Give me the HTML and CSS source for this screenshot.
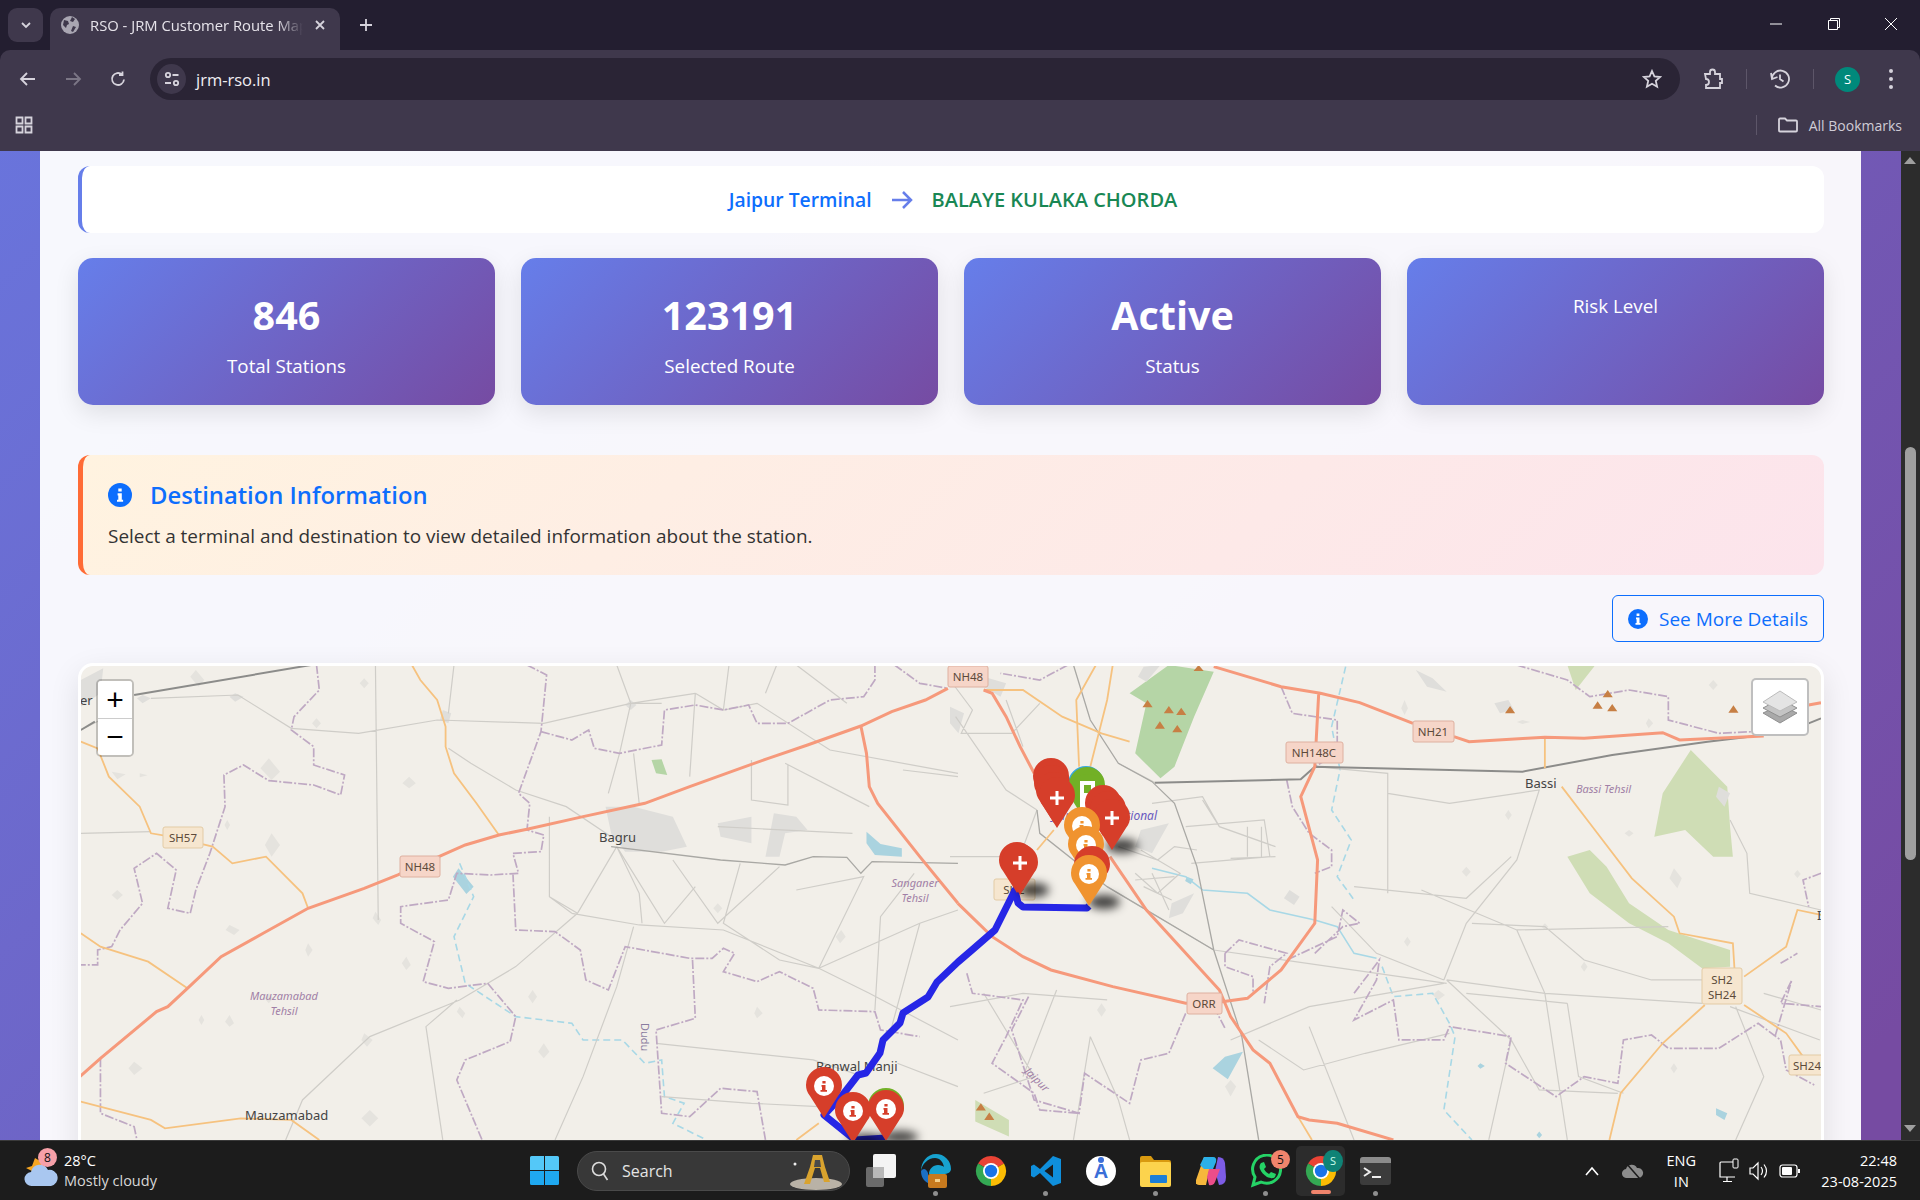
FILE: index.html
```html
<!DOCTYPE html>
<html lang="en">
<head>
  <meta charset="UTF-8" />
  <title>RSO - JRM Customer Route Map</title>
  <link rel="stylesheet" href="styles.css">
</head>
<body>
  <svg class="defs" width="0" height="0">
    <defs>
      <symbol id="i-circle" viewBox="0 0 24 24">
        <circle cx="12" cy="12" r="12" fill="#0d6efd"/>
        <path fill="#fff" d="M10.3 5.500h3.400v3h-3.400zM9.600 10.300h4.200v6.400h1.300v2.100H9v-2.100h1.300v-4.300H9.600z"/>
      </symbol>
      <symbol id="chrome" viewBox="0 0 32 32">
        <path fill="#ea4335" d="M3 8.500A15 15 0 0 1 29 8.500L16 16z"/>
        <path fill="#34a853" d="M3 8.500A15 15 0 0 0 16 31L16 16z"/>
        <path fill="#fbbc04" d="M29 8.500A15 15 0 0 1 16 31L16 16z"/>
        <circle cx="16" cy="16" r="8" fill="#fff"/>
        <circle cx="16" cy="16" r="6.200" fill="#1a73e8"/>
      </symbol>
      <path id="pin" d="M0 0L-14-22C-17-26-18-29-18-33A18 18 0 0 1 18-33C18-29 17-26 14-22Z"/>
      <g id="pin-plus">
        <rect x="-7" y="-33.500" width="14" height="3" fill="#fff"/>
        <rect x="-1.500" y="-39" width="3" height="14" fill="#fff"/>
      </g>
      <g id="pin-info">
        <circle cx="0" cy="-32" r="10" fill="#fff"/>
        <path d="M-1.600-37h3.200v2.500h-3.200zM-2.500-33h4v5h1.500v1.700h-6.500v-1.700h1.500v-3.300h-.5z"/>
      </g>
      <filter id="soft" x="-50%" y="-100%" width="200%" height="300%"><feGaussianBlur stdDeviation="5"/></filter>
    </defs>
  </svg>

  <!-- browser chrome -->
  <div class="tabstrip">
    <div class="tab-list">
      <svg width="14" height="14" viewBox="0 0 14 14"><path d="M3 5l4 4 4-4" class="ic-line"/></svg>
    </div>
    <div class="tab">
      <svg width="18" height="18" viewBox="0 0 18 18">
        <circle cx="9" cy="9" r="9" fill="#a9a6b2"/>
        <path fill="#3f384c" d="M3 4l4 1 1 3-2 1-1 3-3-3zM11 1l3 2-2 3-3-1zM12 10l3 1-3 5-2-1z"/>
      </svg>
      <span class="tab-title">RSO - JRM Customer Route Map</span>
      <svg class="tab-close" width="14" height="14" viewBox="0 0 14 14"><path d="M3 3l8 8M11 3l-8 8" class="ic-line"/></svg>
    </div>
    <svg class="new-tab" width="16" height="16" viewBox="0 0 16 16"><path d="M8 2v12M2 8h12" class="ic-line"/></svg>
    <div class="win-controls">
      <div class="win-btn"><svg width="14" height="14" viewBox="0 0 14 14"><path d="M1 7h12" stroke="#fff" fill="none"/></svg></div>
      <div class="win-btn"><svg width="14" height="14" viewBox="0 0 14 14"><path d="M1.500 3.500h9v9h-9zM3.500 3.500v-2h9v9h-2" stroke="#fff" fill="none"/></svg></div>
      <div class="win-btn"><svg width="14" height="14" viewBox="0 0 14 14"><path d="M1 1l12 12M13 1L1 13" stroke="#fff" fill="none"/></svg></div>
    </div>
  </div>

  <div class="toolbar">
    <div class="nav-btn"><svg width="18" height="18" viewBox="0 0 18 18"><path d="M16 9H2M8 3L2 9l6 6" class="ic-line"/></svg></div>
    <div class="nav-btn dim"><svg width="18" height="18" viewBox="0 0 18 18"><path d="M2 9h14M10 3l6 6-6 6" class="ic-line"/></svg></div>
    <div class="nav-btn"><svg width="18" height="18" viewBox="0 0 18 18"><path d="M15 9.500A6 6 0 1 1 13 4.500M13.500 1.500v3.500H10" class="ic-line"/></svg></div>
    <div class="omnibox">
      <div class="site-info">
        <svg width="16" height="16" viewBox="0 0 16 16"><circle cx="4" cy="4" r="2.200" class="ic-line"/><path d="M8.500 4h6M1 12h6" class="ic-line"/><circle cx="12" cy="12" r="2.200" class="ic-line"/></svg>
      </div>
      <span class="url">jrm-rso.in</span>
      <svg class="star" width="20" height="20" viewBox="0 0 20 20"><path d="M10 2l2.400 5.400 5.800.6-4.400 3.900 1.300 5.800L10 14.700l-5.100 3 1.300-5.800L1.800 8l5.800-.6z" class="ic-line"/></svg>
    </div>
    <div class="tools">
      <svg width="24" height="24" viewBox="0 0 24 24"><path d="M4 7h5V5a2.500 2.500 0 0 1 5 0v2h5v5h2v4h-2v5H5v-3a2.500 2.500 0 0 0 0-6z" class="ic-line"/></svg>
      <span class="tool-sep"></span>
      <svg width="24" height="24" viewBox="0 0 24 24"><path d="M4 12a8.500 8.500 0 1 1 3 6.500M3 6l1 6 5.500-2M12 7.500V12l3.500 2.500" class="ic-line"/></svg>
      <span class="tool-sep"></span>
      <span class="avatar">S</span>
      <span class="kebab"><i></i><i></i><i></i></span>
    </div>
  </div>

  <div class="bookmarks">
    <svg width="18" height="18" viewBox="0 0 18 18"><path d="M1.500 1.500h6v6h-6zM10.500 1.500h6v6h-6zM1.500 10.500h6v6h-6zM10.500 10.500h6v6h-6z" class="ic-line"/></svg>
    <span class="bm-sep"></span>
    <svg width="20" height="16" viewBox="0 0 20 16"><path d="M1 2.500a1 1 0 0 1 1-1h5l2 2h9a1 1 0 0 1 1 1v9a1 1 0 0 1-1 1H2a1 1 0 0 1-1-1z" class="ic-line"/></svg>
    <span class="bm-label">All Bookmarks</span>
  </div>

  <!-- page -->
  <div class="viewport">
    <div class="page">
      <div class="container">
        <div class="route-card">
          <span class="from">Jaipur Terminal</span>
          <svg width="22" height="20" viewBox="0 0 22 20"><path d="M1 10h19M12 2l8 8-8 8" fill="none" stroke="#667eea" stroke-width="2.500"/></svg>
          <span class="to">BALAYE KULAKA CHORDA</span>
        </div>

        <div class="stats">
          <div class="stat"><div class="stat-value">846</div><div class="stat-label">Total Stations</div></div>
          <div class="stat"><div class="stat-value">123191</div><div class="stat-label">Selected Route</div></div>
          <div class="stat"><div class="stat-value">Active</div><div class="stat-label">Status</div></div>
          <div class="stat"><div class="stat-label">Risk Level</div></div>
        </div>

        <div class="dest-info">
          <h3><svg width="24" height="24"><use href="#i-circle"/></svg>Destination Information</h3>
          <p>Select a terminal and destination to view detailed information about the station.</p>
        </div>

        <div class="more-row">
          <button class="more-btn"><svg width="20" height="20"><use href="#i-circle"/></svg>See More Details</button>
        </div>

        <div class="map">
          <svg class="map-canvas" width="1740" height="480" viewBox="81 666 1740 480">
            <!-- left half, traced in crop units -->
            <g class="base" transform="translate(78 660) scale(.5612 .3333)">
              <path class="blob" d="M990 440L1060 470 1085 560 1040 575 975 575 950 520 940 440ZM1140 490L1200 470 1200 550 1145 530ZM1240 460L1280 470 1300 510 1260 520 1250 590 1225 590ZM650 150l15 10-5 30-15-10zM985 120l10 15-10 15-10-15zM115 105l15 10-15 15-10-15zM280 100l15 10-15 15-10-15zM5 60L45 25 40 100 5 140z"/>
              <path class="spot" d="M340 295l20 40-15 25-20-35zM425 175l8 15-8 15-8-15zM510 55l8 15-8 15-8-15zM210 30l15 30-10 20-15-30zM590 350l12 20-12 15-12-15zM60 335l25 8-15 15zM110 340l14 6-14 6zM345 520l15 35-15 35-12-35zM266 480l5 15-5 15-5-15zM270 795l18 15-10 15-15-15zM530 755l10 25-5 15-10-20zM680 1040l10 20-5 15-10-20zM510 1120l15 20-10 20-10-20zM830 1150l10 25-10 20-10-20zM520 1350l15 25-15 25-15-25zM270 1065l8 25-8 10-8-15zM220 1065l5 15-5 15-5-15zM100 1205l15 20-15 20-10-20zM810 990l8 20-8 20-8-20zM585 890l8 25-8 15-8-20zM410 850l8 20-8 20-5-20zM70 690l10 15-10 15-10-15zM1140 730l8 15-8 15-8-15zM1210 1040l10 20-10 15-5-15zM1360 810l8 20-10 20-8-20zM340 1000l8 15-8 15-8-15z"/>
              <path class="lake" d="M678 625L705 680 692 702 668 650ZM1405 515L1430 552 1468 565 1468 590 1420 585 1405 550Z"/>
              <path class="forest" d="M1022 300L1040 298 1050 345 1030 340Z"/>
              <path class="river-d" d="M680 610L705 710 670 830 690 970 780 1070 880 1090 900 1140 970 1140 1010 1210 1040 1200 1045 1310 1080 1330 1060 1390 1120 1440"/>
              <path class="minor" d="M5 520L130 515M130 115L285 105 380 205 500 220 640 180 830 190 985 130 1100 100M660 265L700 310 780 390 870 440 950 530M985 130L965 280 945 400M985 130L1040 130M960 560L890 760 780 920 680 1020 520 1130 400 1320 370 1440M880 760L1000 795 1150 810 1320 925 1410 1000 1568 1140M960 560L1000 700 1005 790M960 560L1045 790 1100 680M1060 600L1140 790 1250 620M840 710L890 760M1180 610L1150 790 1250 900 1320 925M1320 925L1500 790 1568 750M1280 690L1400 650 1320 925M1490 640L1430 770 1420 1050M1100 100L1150 150 1210 130 1340 270 1568 340M1260 310L1410 440M1100 100L1090 350M1000 430L990 280M1200 300L1200 420 1265 435 1265 315M675 1020L620 1100 650 1440M990 800L960 980 900 1250 850 1440M1030 1150L1310 1200 1400 1250M1040 1310L1200 1330 1320 1340M1460 1210L1568 1280M1470 330L1568 350M1140 500L1380 520M670 15L660 160M960 15L985 130M1160 15L1150 150M1245 15L1225 100M1280 15L1370 130M530 15L535 780M5 210L40 180M840 470L840 710 880 760M1500 790L1450 1100"/>
              <path class="bound" d="M425 15L430 90 385 170 380 210 420 260 420 315 475 345 468 405 420 375 340 362 295 315 260 345 262 440 235 580 210 690 200 760 160 745 175 630 140 580 100 625 115 730 75 810 60 860 35 870 35 915 5 915M800 15L835 45 825 215 785 400 805 430 800 510 830 525 825 575 775 580 785 640 735 645 675 640 660 720 575 740 575 790 635 845 615 965 660 985 730 970 780 1070 770 1145 690 1200 675 1260 720 1440M825 215L880 240 910 210 920 265 965 280 1040 255 1045 150 1100 135 1150 150 1195 135 1210 190 1265 190 1340 120 1400 110 1420 60 1420 15M1455 15L1500 70 1550 85M775 640L780 810 850 815 895 870 905 960 945 990 975 860 1090 895 1130 895 1150 865 1170 880 1150 935 1210 965 1250 935 1310 985 1320 1050 1420 1055 1430 1110 1500 1130M1095 900L1100 1075 1030 1110 1040 1360 1090 1370 1145 1285 1210 1295 1225 1440M40 1195L40 1360 100 1400 105 1440"/>
              <path class="rail" d="M100 105L415 15M5 210L30 185"/>
              <path class="rail-thin" d="M950 560L1145 600 1260 615 1310 590 1370 592 1395 640 1415 605 1568 610"/>
              <path class="sec" d="M595 15L610 60 640 120 655 200 655 260 670 340 710 430 750 525M5 245L35 265 55 350 110 440 130 520 165 530 240 560 275 610 335 590 400 700 410 745M5 820L40 860 125 905 195 985M5 1325L130 1380 155 1405 290 1375 380 1380 430 1440M1280 1440L1320 1390"/>
              <path class="pri" d="M0 1255L40 1195 140 1055 160 1040 195 985 255 890 330 820 410 745 510 685 570 645 650 585 690 555 750 525 800 508 900 470 1010 430 1090 380 1230 295 1300 255 1395 198 1450 155 1510 120 1550 85M1395 198L1405 280 1410 380 1425 430 1500 590 1568 730"/>
            </g>
            <!-- right half -->
            <g class="base" transform="translate(950 660) scale(.5612 .3333)">
              <path class="scrub" d="M1320 270L1385 380 1390 500 1395 590 1360 590 1310 510 1255 530 1270 400ZM1100 590L1140 570 1170 620 1210 730 1280 810 1390 870 1390 920 1340 925 1280 850 1210 790 1140 700ZM45 1320L105 1380 105 1430 45 1385ZM1100 15L1150 15 1115 90Z"/>
              <path class="forest" d="M390 15L470 35 435 170 400 320 375 355 330 280 350 130 320 100Z"/>
              <path class="blob" d="M0 140l25 20-10 60-15-30zM345 20l30-5-25 50-15-15zM830 30l30 25 25 40-35-15zM605 690l18 20-10 25-18-20zM1370 380l20 20-10 40-15-30zM395 730l40-30-20 60-25 15zM970 130l25-10 10 30-25 10zM60 50l40 20-10 40-30-30zM340 510l50-20-30 90-30-20z"/>
              <path class="spot" d="M1290 625l14 30-8 30-14-30zM810 120l6 25-6 20-6-20zM1020 180l14 6-14 6-10-6zM1245 175l8 15-8 15-5-15zM920 620l8 15-8 15-8-15zM995 450l6 15-6 15-6-15zM270 1030l8 20-8 20-8-20zM1130 905l6 15-6 15-6-15zM815 830l6 15-6 15-6-15zM500 1260l10 20-10 30-10-30zM870 990l12 15-12 15-10-15zM1060 790l6 10-6 10-6-10zM1470 100l5 10-5 10-5-10zM1210 510l8 10-8 10-8-10zM1510 630l6 12-6 12-6-12zM1290 1210l6 15-6 15-6-15zM1360 60l8 15-8 15-8-15z"/>
              <path class="lake" d="M522 1175L495 1258 468 1225 490 1190ZM422 650l12 8-5 15-10-10zM1050 1415l5 10-5 10-5-10zM945 1210l8 8-8 8-5-8zM1365 1345l20 15-5 20-15-15z"/>
              <path class="river" d="M450 690L530 700 570 750 650 780 690 800 720 880 760 895M360 625L420 650 450 690"/>
              <path class="river-d" d="M705 20L680 200 695 330 680 450 715 540 690 650 720 720M770 920L790 1010 860 1000 890 1090 900 1130 880 1350 930 1440"/>
              <path class="minor" d="M0 590L150 590M10 170L100 390 155 450M155 450L100 700M280 680L470 870 885 970M360 430L450 410 480 500 580 560M650 320L780 340 780 700M780 400L890 430 1050 390 1010 600 920 790 880 960M720 680L920 715 1000 590M840 690L1010 810 1280 800M930 790L1060 800 1130 900 1250 960 1345 960M885 960L1000 1140 1050 1290 1190 1300M885 960L1060 1000 1340 1030M500 1140L640 1040 880 970M680 740L760 880 880 960M550 1140L630 1230 740 1180 890 1120M250 1130L300 1320 320 1440M60 1000L150 1250 60 1300M0 1040L130 1000 280 1020M190 990L130 1250M1390 480L1420 580 1425 700 1552 750M1400 1040L1450 1250 1400 1440M1100 1030L1120 1250 1200 1300M1000 1140L960 1440M640 1100L720 1440M920 1000L1100 1030M300 310L365 368M420 500L560 480 570 590 430 610M330 640L370 700 410 640 340 570M0 60L40 150 20 220 110 220 160 130M100 120L130 260M450 420L480 500M530 500L530 590M555 500L555 590M500 595L580 590M300 560L370 600 400 560 440 570M330 660L400 650M345 680L395 720M360 640L390 750M250 1130L220 1440M1010 810L1060 1000 1100 1440M1390 1040L1550 1140M1450 1000L1552 1050"/>
              <path class="bound" d="M1010 15L1100 60 1140 110 1210 90 1280 110 1280 180 1370 220 1430 215M590 80L610 160 690 180 690 280 650 320M600 360L610 440 640 520 680 570 680 620 650 640M490 880L515 840 600 880 570 920 560 1030M490 880L490 920 540 950 540 1000M650 880L700 800 730 790 700 750 690 830 600 900M720 1000L765 900 760 960 720 1080 790 1020 800 1140 880 1140 890 1100 1000 1130 990 1210 1080 1310 1130 1250 1190 1270 1200 1140 1250 1125 1280 1165 1370 1165 1440 1090 1480 1140 1490 1230 1540 1275M420 1060L390 1180 340 1200 320 1330 240 1240 230 1360 150 1320 110 1110 140 1010M30 940L40 1000 130 1020 100 1130 75 1210 150 1300 160 1350 230 1360M1470 1130L1500 960 1480 1030 1552 1040M1552 640L1520 660 1530 740M210 15L160 60 90 40M1480 910L1510 880M470 1040L490 1105"/>
              <path class="rail" d="M365 368L625 358 650 320 1020 335 1180 285 1350 245 1450 225 1530 190 1552 175"/>
              <path class="rail-thin" d="M220 15L250 180 300 310 360 365 400 430 440 620 470 870 520 1130 550 1440M155 450L160 520 280 680 470 870"/>
              <path class="sec" d="M1090 380L1140 490 1215 655 1290 770 1300 820 1395 850 1398 930M1415 950L1490 860 1510 750 1552 765M1345 1035L1270 1150 1195 1300 1175 1440M1415 1035L1490 1120 1520 1190M1060 235L1060 325M620 1370L645 1440M290 15L280 120 250 320M260 15L225 120 230 320M60 90L130 90 200 170 270 220 320 245M155 570L185 510"/>
              <path class="pri" d="M60 90L75 100 100 170 125 260 150 340M285 590L350 750 480 990 500 1070 540 1170 570 1210 620 1370 640 1380 690 1390 790 1440M14 730L75 830 130 890 180 930 290 980 420 1030 485 1025 530 1015 590 930 650 790 655 600 625 410 650 320 657 100M470 20L590 80 660 100 730 128 825 190M898 230L925 245 1060 232 1130 235 1270 218 1300 240 1450 228M1530 135L1552 128"/>
              <path class="peak" d="M352 120l9 22h-18zM390 138l9 22h-18zM412 143l9 22h-18zM374 184l9 22h-18zM405 195l9 22h-18zM998 138l9 22h-18zM1172 90l9 22h-18zM1154 124l9 22h-18zM1180 132l9 22h-18zM1396 136l9 22h-18zM443 15l9 18h-18zM55 1330l9 22h-18zM70 1358l9 22h-18z"/>
            </g>

            <!-- labels -->
            <text class="place" x="599" y="842">Bagru</text>
            <text class="place" x="245" y="1120">Mauzamabad</text>
            <text class="place" x="816" y="1071">Renwal Manji</text>
            <text class="place" x="1525" y="788">Bassi</text>
            <text class="place" x="80" y="705">er</text>
            <text class="place" x="1817" y="920">I</text>
            <text class="area" x="284" y="1000" text-anchor="middle">Mauzamabad</text>
            <text class="area" x="284" y="1015" text-anchor="middle">Tehsil</text>
            <text class="area" x="915" y="887" text-anchor="middle">Sanganer</text>
            <text class="area" x="915" y="902" text-anchor="middle">Tehsil</text>
            <text class="area" x="1576" y="793">Bassi Tehsil</text>
            <text class="area" transform="translate(1024 1072) rotate(45)">Jaipur</text>
            <text class="water" transform="translate(641 1023) rotate(90)">Dudu</text>
            <text class="airport" x="1157" y="820" text-anchor="end">Jaipur International</text>

            <!-- road shields -->
            <rect class="shield-nh" x="948" y="666" width="40" height="21" rx="2"/><text class="shield-txt" x="968" y="681">NH48</text>
            <rect class="shield-sh" x="163" y="827" width="40" height="21" rx="2"/><text class="shield-txt" x="183" y="842">SH57</text>
            <rect class="shield-nh" x="400" y="856" width="40" height="21" rx="2"/><text class="shield-txt" x="420" y="871">NH48</text>
            <rect class="shield-nh" x="1413" y="721" width="41" height="21" rx="2"/><text class="shield-txt" x="1433" y="736">NH21</text>
            <rect class="shield-nh" x="1286" y="742" width="57" height="21" rx="2"/><text class="shield-txt" x="1314" y="757">NH148C</text>
            <rect class="shield-nh" x="1187" y="993" width="35" height="21" rx="2"/><text class="shield-txt" x="1204" y="1008">ORR</text>
            <rect class="shield-sh" x="1702" y="968" width="40" height="36" rx="2"/><text class="shield-txt" x="1722" y="984">SH2</text><text class="shield-txt" x="1722" y="999">SH24</text>
            <rect class="shield-sh" x="1789" y="1055" width="40" height="20" rx="2"/><text class="shield-txt" x="1807" y="1070">SH24</text>
            <rect class="shield-sh" x="994" y="879" width="41" height="21" rx="2"/><text class="shield-txt" x="1014" y="894">SH2</text>

            <!-- route -->
            <path class="route" d="M1089 906L1087 908 1023 907 1018 903 1015 890 995 930 972 950 958 962 937 982 928 997 903 1013 900 1023 883 1040 880 1053 866 1073 858 1075 841 1097 824 1115 855 1140 886 1138"/>

            <!-- markers -->
            <g class="shadows" filter="url(#soft)">
              <ellipse cx="1122" cy="846" rx="16" ry="7"/>
              <ellipse cx="1104" cy="902" rx="16" ry="7"/>
              <ellipse cx="1034" cy="890" rx="15" ry="7"/>
              <ellipse cx="900" cy="1137" rx="18" ry="6"/>
              <ellipse cx="866" cy="1140" rx="18" ry="6"/>
            </g>
            <use href="#pin" class="pin-blue" x="1086" y="817"/>
            <use href="#pin" class="pin-red" x="1051" y="809"/>
            <use href="#pin" class="pin-red" x="1052" y="816"/>
            <use href="#pin" class="pin-red" x="1054" y="823"/>
            <g transform="translate(1087 818)"><use href="#pin" class="pin-green"/></g>
            <g transform="translate(1088 825)">
              <use href="#pin" class="pin-green"/>
              <path fill="#fff" fill-rule="evenodd" d="M-8-44H7V-14H-8ZM-4-40V-32H3V-40Z"/>
            </g>
            <use href="#pin" class="pin-red" x="1057" y="828"/>
            <use href="#pin-plus" x="1057" y="830"/>
            <use href="#pin" class="pin-red" x="1103" y="836"/>
            <use href="#pin" class="pin-red" x="1108" y="842"/>
            <use href="#pin" class="pin-red" x="1112" y="850"/>
            <use href="#pin-plus" x="1112" y="850"/>
            <g class="pin-orange" transform="translate(1082 858)"><use href="#pin"/><use href="#pin-info"/></g>
            <g class="pin-orange" transform="translate(1086 877)"><use href="#pin"/><use href="#pin-info"/></g>
            <use href="#pin" class="pin-red" x="1092" y="897"/>
            <g class="pin-orange" transform="translate(1089 906)"><use href="#pin"/><use href="#pin-info"/></g>
            <use href="#pin" class="pin-red" x="1017" y="893"/>
            <use href="#pin" class="pin-red" x="1020" y="895"/>
            <use href="#pin-plus" x="1020" y="895"/>
            <g class="pin-red" transform="translate(824 1118)"><use href="#pin"/><use href="#pin-info"/></g>
            <use href="#pin" class="pin-green" x="886" y="1139"/>
            <g class="pin-red" transform="translate(886 1141)"><use href="#pin"/><use href="#pin-info"/></g>
            <g class="pin-red" transform="translate(853 1143)"><use href="#pin"/><use href="#pin-info"/></g>
          </svg>

          <div class="zoom-ctl">
            <span>+</span>
            <span>&#8722;</span>
          </div>
          <div class="layers-ctl">
            <svg width="36" height="34" viewBox="0 0 36 34">
              <path fill="#a9a9a9" stroke="#8f8f8f" d="M18 15L35 23 18 33 1 23Z"/>
              <path fill="#c4c4c4" stroke="#8f8f8f" d="M18 9L35 18 18 27 1 18Z"/>
              <path fill="#e4e4e4" stroke="#bbb" d="M18 1L35 12 18 21 1 12Z"/>
            </svg>
          </div>
        </div>
      </div>
    </div>
    <div class="scrollbar">
      <span class="arrow-up"></span>
      <span class="thumb"></span>
      <span class="arrow-down"></span>
    </div>
  </div>

  <!-- windows taskbar -->
  <div class="taskbar">
    <div class="weather">
      <div class="weather-icon">
        <svg width="34" height="32" viewBox="0 0 34 32">
          <path fill="#f6a623" d="M2 13l6-2 3-8 5 3 3 6-7 6z"/>
          <path fill="#a9c7f0" d="M8 31a7 7 0 0 1-1-14 9 9 0 0 1 17-2 7.500 7.500 0 0 1 3 16z"/>
        </svg>
        <span class="badge-pink">8</span>
      </div>
      <div class="weather-text"><span>28°C</span><span class="dim-text">Mostly cloudy</span></div>
    </div>

    <div class="tb-apps">
      <div class="tb-start">
        <svg width="29" height="29" viewBox="0 0 29 29">
          <path fill="#54c8f8" d="M0 1.500A1.500 1.500 0 0 1 1.500 0H14v14H0zM15 0h12.500A1.500 1.500 0 0 1 29 1.500V14H15z"/>
          <path fill="#1fa8f0" d="M0 15h14v14H1.500A1.500 1.500 0 0 1 0 27.500zM15 15h14v12.500a1.500 1.500 0 0 1-1.500 1.500H15z"/>
        </svg>
      </div>
      <div class="tb-search">
        <svg width="20" height="22" viewBox="0 0 20 22"><circle cx="9" cy="9" r="6.500" fill="none" stroke="#ddd" stroke-width="1.600"/><path d="M13.500 14l4 6" stroke="#ddd" stroke-width="1.600"/></svg>
        <span>Search</span>
        <svg class="tb-lander" width="57" height="38" viewBox="0 0 57 38">
          <ellipse cx="30" cy="32" rx="26" ry="6" fill="#b9b2a6"/>
          <path fill="#d9a32e" d="M27 3h9l3 12 5 15h-6l-4-14h-5l-5 16h-6l6-17z"/>
          <path fill="#4b4b4b" d="M29 8h5l1 7h-7z"/>
          <circle cx="9" cy="12" r="1.500" fill="#eee"/>
        </svg>
      </div>
      <div class="tb-slot">
        <svg width="30" height="36" viewBox="0 0 30 36">
          <rect x="0" y="14" width="18" height="20" rx="2" fill="#6b6b6b"/>
          <rect x="7" y="1" width="23" height="24" rx="2" fill="#f4f4f4"/>
          <rect x="7" y="14" width="11" height="11" fill="#b9b9b9"/>
        </svg>
      </div>
      <div class="tb-slot dot">
        <svg width="32" height="36" viewBox="0 0 32 36">
          <path fill="#17a2cf" d="M16 1a15 15 0 0 1 15 15c0 3-3 5-8 5H9c0-5 4-9 9-9 3 0 5 1 6 2-1-5-4-9-9-9C8 5 2 11 1 18 1 9 7 1 16 1z"/>
          <path fill="#1b6fc4" d="M1 18c0 6 3 10 7 12V20C6 15 3 15 1 18z"/>
          <rect x="8" y="21" width="19" height="14" rx="2" fill="#c77a1e"/>
          <rect x="15" y="26" width="5" height="3" fill="#f5d08a"/>
        </svg>
      </div>
      <div class="tb-slot"><svg width="32" height="32"><use href="#chrome"/></svg></div>
      <div class="tb-slot dot">
        <svg width="32" height="32" viewBox="0 0 32 32"><path fill="#0f8fdc" fill-rule="evenodd" d="M23 1L10 14 4 9.500 1 11v10l3 1.500L10 18l13 13 8-3V4zM23 9.500v13L14.500 16z"/></svg>
      </div>
      <div class="tb-slot">
        <svg width="32" height="34" viewBox="0 0 32 34">
          <circle cx="16" cy="17" r="15" fill="#fff"/>
          <text x="16" y="24" class="tb-a">A</text>
          <circle cx="16" cy="6" r="3" fill="#3b6fd8"/>
        </svg>
      </div>
      <div class="tb-slot dot">
        <svg width="31" height="32" viewBox="0 0 31 32">
          <path fill="#d99a10" d="M0 3a2 2 0 0 1 2-2h9l3 4h15a2 2 0 0 1 2 2v4H0z"/>
          <rect y="7" width="31" height="25" rx="2" fill="#fcd34d"/>
          <rect x="10" y="20" width="17" height="8" rx="1" fill="#1d7fd6"/>
        </svg>
      </div>
      <div class="tb-slot">
        <svg width="30" height="32" viewBox="0 0 30 32">
          <path fill="#f6b73c" d="M8 2h8L10 30H3Q-1 30 0 25z"/>
          <path fill="#2bb0e8" d="M8 2h9q4 0 3 5l-3 7H8L4 10z"/>
          <path fill="#7d5ce6" d="M22 2q6 0 7 6l1 14q0 8-7 8l-4-14z"/>
          <path fill="#ec4d8a" d="M13 14h11l-5 13q-2 4-6 3l-2-8z"/>
        </svg>
      </div>
      <div class="tb-slot dot">
        <svg width="32" height="34" viewBox="0 0 32 34">
          <path fill="none" stroke="#25d366" stroke-width="3" d="M3 31l2-8a14 14 0 1 1 6 5z"/>
          <path fill="#25d366" d="M11 9l3-1 2 5-2 2c1 2 3 4 5 5l2-2 5 2-1 3c-2 2-5 1-8 0-3-2-6-5-7-8-1-2 0-5 1-6z"/>
        </svg>
        <span class="badge-coral">5</span>
      </div>
      <div class="tb-slot active">
        <svg width="32" height="32"><use href="#chrome"/></svg>
        <span class="badge-teal">S</span>
      </div>
      <div class="tb-slot dot">
        <svg width="31" height="28" viewBox="0 0 31 28">
          <rect width="31" height="28" rx="3" fill="#3c3c3c"/>
          <path d="M0 6V3a3 3 0 0 1 3-3h25a3 3 0 0 1 3 3v3z" fill="#8c8c8c"/>
          <path d="M4 11l6 4-6 4" fill="none" stroke="#eee" stroke-width="2"/>
          <rect x="12" y="19" width="9" height="2" fill="#eee"/>
        </svg>
      </div>
    </div>

    <div class="tray">
      <svg width="16" height="10" viewBox="0 0 16 10"><path d="M2 9l6-7 6 7" fill="none" stroke="#fff" stroke-width="1.600"/></svg>
      <svg class="tray-cloud" width="22" height="18" viewBox="0 0 22 18"><path fill="#8d8d8d" d="M5 16a4.500 4.500 0 0 1-1-9 6 6 0 0 1 11-1 5 5 0 0 1 2 10z"/><path stroke="#1c1c1c" stroke-width="1.500" d="M4 1l14 16"/></svg>
      <div class="tray-lang"><span>ENG</span><span>IN</span></div>
      <svg width="24" height="26" viewBox="0 0 24 26"><path d="M17 4H4a1 1 0 0 0-1 1v14h15M10 19v4M6 23.500h9" fill="none" stroke="#fff" stroke-width="1.200"/><rect x="16" y="1" width="5" height="9" rx="1" fill="#1c1c1c" stroke="#fff"/></svg>
      <svg width="22" height="20" viewBox="0 0 22 20"><path d="M1 7h3l5-5v16l-5-5H1z" fill="none" stroke="#fff" stroke-width="1.200"/><path d="M12 6q3 4 0 8M15 3.500q5 6.500 0 13" fill="none" stroke="#fff" stroke-width="1.200"/></svg>
      <svg width="22" height="14" viewBox="0 0 22 14"><rect x="1" y="1" width="17" height="12" rx="2.500" fill="none" stroke="#fff" stroke-width="1.200"/><rect x="3" y="3" width="10" height="8" rx="1" fill="#fff"/><rect x="19" y="5" width="2" height="4" fill="#fff"/></svg>
      <div class="clock"><span>22:48</span><span>23-08-2025</span></div>
    </div>
  </div>
</body>
</html>
```

FILE: styles.css
```css
:root {
  --tab-bg: #231e30;
  --bar-bg: #3f384c;
  --omni-bg: #2a2435;
  --ui-line: #d6d3dc;
  --blue: #0d6efd;
  --green: #198754;
}

* {
  box-sizing: border-box;
}

html, body {
  height: 100%;
}

body {
  margin: 0;
  display: flex;
  flex-direction: column;
  height: 1200px;
  overflow: hidden;
  font-family: "Open Sans", "Liberation Sans", sans-serif;
  background: var(--tab-bg);
}

.defs {
  position: absolute;
}

.ic-line {
  fill: none;
  stroke: var(--ui-line);
  stroke-width: 1.8;
}

/* tab strip */
.tabstrip {
  height: 50px;
  flex: none;
  display: flex;
  align-items: flex-end;
  padding-left: 8px;
  background: var(--tab-bg);
}

.tab-list {
  width: 35px;
  height: 34px;
  margin-bottom: 8px;
  border-radius: 9px;
  background: var(--bar-bg);
  display: flex;
  align-items: center;
  justify-content: center;
}

.tab {
  width: 290px;
  height: 42px;
  margin-left: 7px;
  padding: 0 13px 8px 11px;
  display: flex;
  align-items: center;
  border-radius: 10px 10px 0 0;
  background: var(--bar-bg);
  color: #e6e3ea;
  font-size: 14.800px;
}

.tab-title {
  flex: 1;
  margin-left: 11px;
  white-space: nowrap;
  overflow: hidden;
  -webkit-mask-image: linear-gradient(90deg, #000 88%, transparent 100%);
  mask-image: linear-gradient(90deg, #000 88%, transparent 100%);
}

.tab-close {
  margin-left: 10px;
}

.new-tab {
  margin: 0 0 17px 18px;
}

.win-controls {
  margin-left: auto;
  align-self: flex-start;
  display: flex;
}

.win-btn {
  width: 57.500px;
  height: 48px;
  display: flex;
  align-items: center;
  justify-content: center;
}

/* toolbar */
.toolbar {
  height: 56px;
  flex: none;
  padding: 2px 0 0 5px;
  display: flex;
  align-items: center;
  border-radius: 10px 10px 0 0;
  background: var(--bar-bg);
}

.nav-btn {
  width: 45px;
  display: flex;
  justify-content: center;
}

.nav-btn.dim {
  opacity: .4;
}

.omnibox {
  flex: 1;
  height: 42px;
  margin-left: 10px;
  padding: 0 18px 0 7px;
  display: flex;
  align-items: center;
  border-radius: 21px;
  background: var(--omni-bg);
}

.site-info {
  width: 29px;
  height: 30px;
  border-radius: 50%;
  background: var(--bar-bg);
  display: flex;
  align-items: center;
  justify-content: center;
}

.url {
  margin-left: 10px;
  font-size: 16.500px;
  color: #f0eef3;
}

.star {
  margin-left: auto;
}

.tools {
  width: 240px;
  flex: none;
  padding-left: 21px;
  display: flex;
  align-items: center;
  gap: 21px;
}

.tool-sep {
  width: 1px;
  height: 20px;
  background: #5d5669;
}

.avatar {
  width: 25px;
  height: 25px;
  border-radius: 50%;
  background: #00897b;
  color: #fff;
  font-size: 13px;
  display: flex;
  align-items: center;
  justify-content: center;
}

.kebab {
  margin-left: 8px;
  display: flex;
  flex-direction: column;
  gap: 4px;
}

.kebab i {
  width: 4px;
  height: 4px;
  border-radius: 50%;
  background: var(--ui-line);
}

/* bookmarks */
.bookmarks {
  height: 45px;
  flex: none;
  padding: 0 18px 7px 15px;
  display: flex;
  align-items: center;
  background: var(--bar-bg);
}

.bm-sep {
  width: 1px;
  height: 20px;
  margin: 0 21px 0 auto;
  background: #5d5669;
}

.bm-label {
  margin-left: 11px;
  font-size: 14px;
  color: #cfccd6;
}

/* page */
.viewport {
  height: 989px;
  flex: none;
  display: flex;
  overflow: hidden;
}

.page {
  flex: 1;
  padding: 0 40px;
  overflow: hidden;
  background: linear-gradient(135deg, #667eea -24%, #764ba2 96%);
}

.container {
  height: 100%;
  padding: 15px 37px 0 38px;
  background: rgba(255, 255, 255, .95);
}

.route-card {
  height: 67px;
  margin-bottom: 25px;
  display: flex;
  align-items: center;
  justify-content: center;
  gap: 19px;
  border-left: 4px solid #667eea;
  border-radius: 12px;
  background: #fff;
  font-size: 19.300px;
  font-weight: 600;
}

.from {
  color: var(--blue);
}

.to {
  color: var(--green);
  font-size: 20px;
}

.stats {
  margin-bottom: 50px;
  display: grid;
  grid-template-columns: repeat(4, 417px);
  justify-content: space-between;
}

.stat {
  height: 147px;
  padding-top: 34px;
  border-radius: 15px;
  background: linear-gradient(135deg, #667eea 0%, #764ba2 100%);
  box-shadow: 0 8px 25px rgba(0, 0, 0, .1);
  color: #fff;
  text-align: center;
}

.stat-value {
  height: 46px;
  margin-bottom: 14px;
  font-size: 39.500px;
  font-weight: 700;
  line-height: 46px;
}

.stat-label {
  font-size: 18.800px;
  line-height: 29px;
}

.dest-info {
  height: 120px;
  margin-bottom: 20px;
  padding: 23px 25px;
  border-left: 5px solid #ff6b35;
  border-radius: 12px;
  background: linear-gradient(135deg, #fff3e0 0%, #fce4ec 100%);
}

.dest-info h3 {
  margin: 0 0 11px;
  display: flex;
  align-items: center;
  gap: 18px;
  font-size: 23.800px;
  font-weight: 600;
  line-height: 34px;
  color: var(--blue);
}

.dest-info p {
  margin: 0;
  font-size: 18.950px;
  line-height: 27px;
  color: #333;
}

.more-row {
  height: 47px;
  margin-bottom: 21px;
  display: flex;
  justify-content: flex-end;
}

.more-btn {
  width: 212px;
  padding: 0;
  display: flex;
  align-items: center;
  justify-content: center;
  gap: 11px;
  border: 1px solid var(--blue);
  border-radius: 6px;
  background: transparent;
  color: var(--blue);
  font-family: inherit;
  font-size: 19px;
}

.map {
  position: relative;
  height: 520px;
  border: 3px solid #fff;
  border-radius: 15px;
  background: #f2efe9;
  box-shadow: 0 10px 30px rgba(0, 0, 0, .1);
  overflow: hidden;
}

.map-canvas {
  display: block;
}

/* map layers */
.base { filter: blur(.5px); }
.blob { fill: #dfdedb; }
.spot { fill: #e5e3de; }
.lake { fill: #aad3df; }
.forest { fill: #b5d5a6; }
.scrub { fill: #cfddb5; }
.peak { fill: #c77f44; }

.minor, .bound, .rail, .rail-thin, .sec, .pri, .river, .river-d, .route {
  fill: none;
  vector-effect: non-scaling-stroke;
}

.minor { stroke: #cfcdc8; stroke-width: 1.2; }
.bound { stroke: #bfa9c3; stroke-width: 1.700; stroke-dasharray: 9 2 2 2; }
.rail { stroke: #8c8c8a; stroke-width: 2; }
.rail-thin { stroke: #a9a8a4; stroke-width: 1.3; }
.sec { stroke: #f6c27f; stroke-width: 1.8; }
.pri { stroke: #f6997b; stroke-width: 3; }
.river { stroke: #a8d8e6; stroke-width: 1.600; }
.river-d { stroke: #a8d8e6; stroke-width: 1.600; stroke-dasharray: 7 4; }
.route { stroke: #2626e6; stroke-width: 7; stroke-linejoin: round; }

.place {
  font-family: "Noto Sans", sans-serif;
  font-size: 13px;
  fill: #444;
}

.area {
  font-family: "Noto Sans", sans-serif;
  font-size: 11px;
  font-style: italic;
  fill: #a17fa6;
}

.water {
  font-family: "Noto Sans", sans-serif;
  font-size: 11px;
  fill: #8a7da0;
}

.airport {
  font-family: "Noto Sans", sans-serif;
  font-size: 12px;
  font-style: italic;
  fill: #6a5bc0;
}

.shield-nh { fill: #f6d5c8; stroke: #deb0a0; }
.shield-sh { fill: #f6e6cf; stroke: #e3cba5; }

.shield-txt {
  font-family: "Noto Sans", sans-serif;
  font-size: 11.500px;
  text-anchor: middle;
  fill: #5c4a3a;
}

.shadows { fill: rgba(0, 0, 0, .75); }
.pin-red { fill: #d63e2a; }
.pin-green { fill: #72b026; }
.pin-orange { fill: #f0932f; }
.pin-blue { fill: #38a9dc; }

/* map controls */
.zoom-ctl {
  position: absolute;
  top: 13px;
  left: 15px;
  width: 38px;
  display: flex;
  flex-direction: column;
  border: 2px solid rgba(0, 0, 0, .2);
  border-radius: 5px;
  overflow: hidden;
}

.zoom-ctl span {
  height: 37px;
  display: flex;
  align-items: center;
  justify-content: center;
  background: #fff;
  color: #000;
  font-family: "Liberation Sans", sans-serif;
  font-size: 30px;
}

.zoom-ctl span + span {
  border-top: 1px solid #ccc;
}

.layers-ctl {
  position: absolute;
  top: 12px;
  right: 12px;
  width: 58px;
  height: 58px;
  display: flex;
  align-items: center;
  justify-content: center;
  border: 2px solid rgba(0, 0, 0, .25);
  border-radius: 5px;
  background: #fff;
}

/* scrollbar */
.scrollbar {
  position: relative;
  width: 19px;
  flex: none;
  background: #2c2c2c;
}

.thumb {
  position: absolute;
  top: 296px;
  left: 4px;
  width: 11px;
  height: 413px;
  border-radius: 6px;
  background: #9f9f9f;
}

.arrow-up, .arrow-down {
  position: absolute;
  left: 3px;
  border-left: 6.500px solid transparent;
  border-right: 6.500px solid transparent;
}

.arrow-up {
  top: 6px;
  border-bottom: 7px solid #9f9f9f;
}

.arrow-down {
  bottom: 8px;
  border-top: 7px solid #9f9f9f;
}

/* taskbar */
.taskbar {
  height: 60px;
  flex: none;
  display: flex;
  align-items: center;
  border-top: 1px solid #3a3a3a;
  background: #1c1c1c;
  color: #fff;
  font-size: 14.500px;
}

.weather {
  width: 530px;
  flex: none;
  padding-left: 24px;
  display: flex;
  align-items: center;
}

.weather-icon {
  position: relative;
  width: 34px;
  height: 32px;
}

.badge-pink, .badge-coral, .badge-teal {
  position: absolute;
  width: 19px;
  height: 19px;
  border-radius: 50%;
  color: #111;
  font-size: 12px;
  display: flex;
  align-items: center;
  justify-content: center;
}

.badge-pink {
  top: -7px;
  left: 14px;
  background: #f6a0a8;
}

.weather-text {
  margin-left: 6px;
  display: flex;
  flex-direction: column;
  gap: 1px;
  line-height: 19px;
}

.dim-text {
  color: #d8d8d8;
}

.tb-apps {
  display: flex;
  align-items: center;
}

.tb-start {
  width: 47px;
}

.tb-start svg {
  display: block;
}

.tb-search {
  width: 273px;
  height: 40px;
  padding: 0 6px 0 12px;
  display: flex;
  align-items: center;
  gap: 12px;
  border-radius: 20px;
  border: 1px solid #4a4a4a;
  background: #383838;
  font-size: 16px;
  color: #e4e4e4;
}

.tb-lander {
  margin-left: auto;
}

.tb-slot {
  position: relative;
  width: 55px;
  height: 50px;
  display: flex;
  align-items: center;
  justify-content: center;
}

.tb-slot:nth-child(3) {
  margin-left: 3px;
}

.tb-slot.dot::after {
  content: "";
  position: absolute;
  left: 25px;
  bottom: 0;
  width: 5px;
  height: 5px;
  border-radius: 50%;
  background: #8f8f8f;
}

.tb-slot.active {
  width: 49px;
  margin: 0 3px;
  border-radius: 5px;
  background: #2c2c2c;
}

.tb-slot.active::after {
  content: "";
  position: absolute;
  left: 15px;
  bottom: 2px;
  width: 20px;
  height: 4px;
  border-radius: 2px;
  background: #f0846c;
}

.tb-a {
  font-family: "Liberation Sans", sans-serif;
  font-size: 20px;
  font-weight: 700;
  text-anchor: middle;
  fill: #3b6fd8;
}

.badge-coral {
  top: 4px;
  right: 3px;
  background: #f0846c;
}

.badge-teal {
  top: 4px;
  right: 2px;
  width: 20px;
  height: 22px;
  background: #0f8376;
  color: #cfe;
  font-size: 11px;
}

.tray {
  margin-left: auto;
  padding-right: 23px;
  display: flex;
  align-items: center;
}

.tray-lang {
  width: 40px;
  margin: 0 16px 0 17px;
  display: flex;
  flex-direction: column;
  align-items: center;
  line-height: 21px;
}

.tray svg + svg {
  margin-left: 8px;
}

.tray svg.tray-cloud {
  margin-left: 22px;
}

.clock {
  margin-left: 20px;
  display: flex;
  flex-direction: column;
  align-items: flex-end;
  line-height: 21px;
}
```
